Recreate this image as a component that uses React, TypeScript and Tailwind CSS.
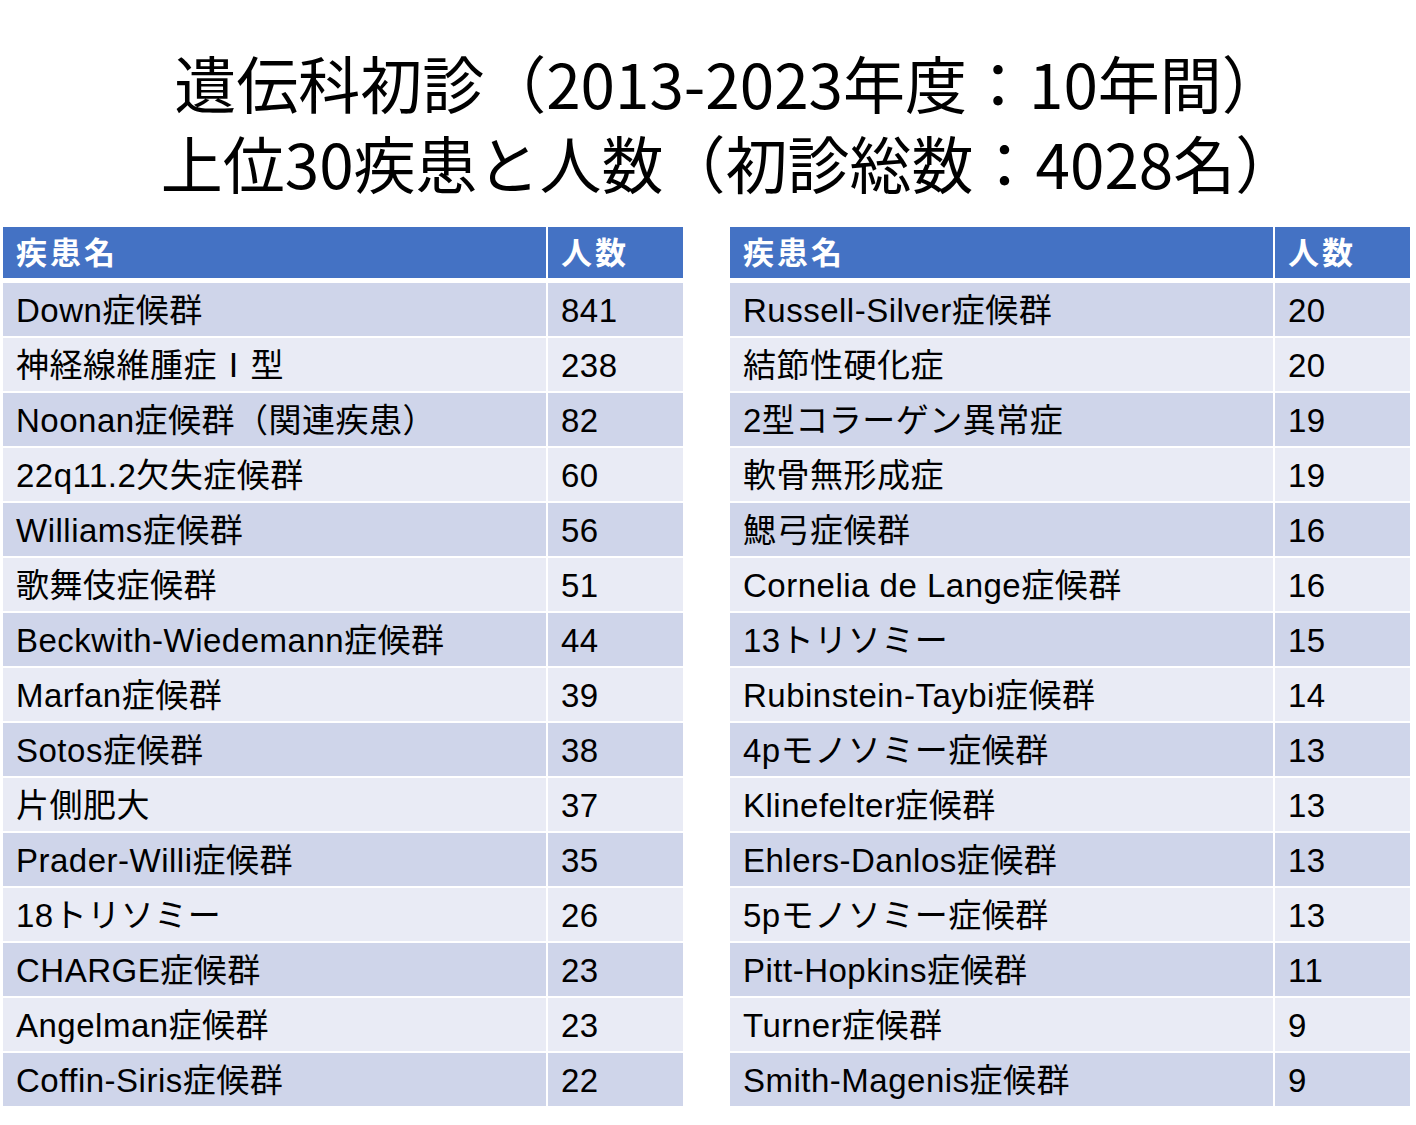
const left: [string, number][] = [
  ['Down症候群', 841],
  ['神経線維腫症Ⅰ型', 238],
  ['Noonan症候群（関連疾患）', 82],
  ['22q11.2欠失症候群', 60],
  ['Williams症候群', 56],
  ['歌舞伎症候群', 51],
  ['Beckwith-Wiedemann症候群', 44],
  ['Marfan症候群', 39],
  ['Sotos症候群', 38],
  ['片側肥大', 37],
  ['Prader-Willi症候群', 35],
  ['18トリソミー', 26],
  ['CHARGE症候群', 23],
  ['Angelman症候群', 23],
  ['Coffin-Siris症候群', 22],
];

const right: [string, number][] = [
  ['Russell-Silver症候群', 20],
  ['結節性硬化症', 20],
  ['2型コラーゲン異常症', 19],
  ['軟骨無形成症', 19],
  ['鰓弓症候群', 16],
  ['Cornelia de Lange症候群', 16],
  ['13トリソミー', 15],
  ['Rubinstein-Taybi症候群', 14],
  ['4pモノソミー症候群', 13],
  ['Klinefelter症候群', 13],
  ['Ehlers-Danlos症候群', 13],
  ['5pモノソミー症候群', 13],
  ['Pitt-Hopkins症候群', 11],
  ['Turner症候群', 9],
  ['Smith-Magenis症候群', 9],
];

function DiseaseTable({ rows }: { rows: [string, number][] }) {
  return (
    <div className="grid grid-cols-[543px_135px] gap-x-[2px] gap-y-[2px]">
      <div className="mb-[3px] flex h-[51px] items-center bg-[#4472c4] pl-[13px] pt-[4px] text-[31px] font-bold tracking-[3px] text-white">
        疾患名
      </div>
      <div className="mb-[3px] flex h-[51px] items-center bg-[#4472c4] pl-[13px] pt-[4px] text-[31px] font-bold tracking-[3px] text-white">
        人数
      </div>
      {rows.map(([name, count], i) => {
        const bg = i % 2 === 0 ? 'bg-[#cfd5ea]' : 'bg-[#e9ebf5]';
        return [
          <div key={`n${i}`} className={`flex h-[53px] items-center whitespace-pre pl-[13px] pt-[2px] ${bg}`}>
            {name}
          </div>,
          <div key={`c${i}`} className={`flex h-[53px] items-center pl-[13px] pt-[2px] ${bg}`}>
            {count}
          </div>,
        ];
      })}
    </div>
  );
}

export default function App() {
  return (
    <div
      className="h-[1125px] w-[1416px] bg-white text-black"
      style={{ fontFamily: '"Liberation Sans", "Noto Sans CJK JP", sans-serif' }}
    >
      <div
        className="flex flex-col items-center pl-[42px] pt-[42px] text-[62px] leading-[80px]"
        style={{ fontFamily: '"Noto Sans CJK JP", sans-serif' }}
      >
        <div>遺伝科初診（2013-2023年度：10年間）</div>
        <div>上位30疾患と人数（初診総数：4028名）</div>
      </div>
      <div className="mt-[25px] flex gap-[47px] pl-[3px] text-[33px] tracking-[0.5px]">
        <DiseaseTable rows={left} />
        <DiseaseTable rows={right} />
      </div>
    </div>
  );
}
